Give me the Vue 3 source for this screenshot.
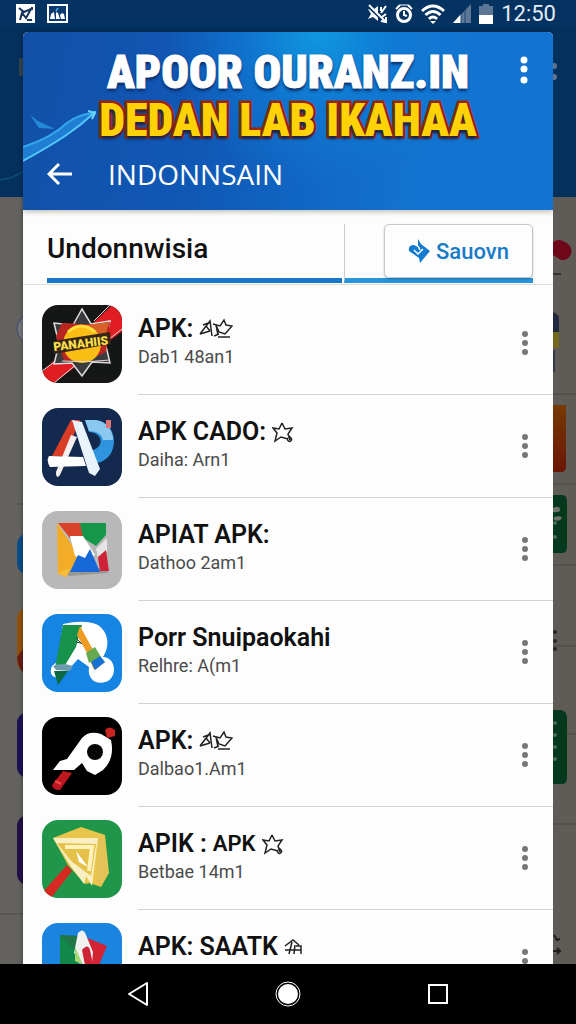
<template>
  <div class="screen">
    <header class="status">
      <div class="status-group">
        <svg width="19" height="19" viewBox="0 0 19 19">
          <path d="M0 0h19v19H0z" fill="#fff" />
          <path d="M3 4l5 4 7-3-5 9-4-5-2 7M11 16h5M16 3v3" fill="none" stroke="#16365f" stroke-width="2" />
        </svg>
        <svg width="21" height="19" viewBox="0 0 21 19">
          <rect x="1" y="1" width="19" height="17" fill="#0d3a6e" stroke="#fff" stroke-width="2" />
          <path d="M3 15l1-5 3-2 1 7zM9 15V8l2 1 2 6zM14 15l-1-4 2-2 2 1 1 5z" fill="#fff" />
          <path d="M9 7l2-3" stroke="#4aa9ee" stroke-width="1.5" />
        </svg>
      </div>
      <div class="status-group right">
        <svg width="20" height="20" viewBox="0 0 20 20" fill="none" stroke="#fff">
          <path d="M1 5l5 1 5-4v15l-5-4-5 2 3-5z" fill="#fff" stroke="none" />
          <path d="M1 2l17 16" stroke="#043261" stroke-width="3" />
          <path d="M2 1l16 16" stroke-width="2" />
          <path d="M14 9l5-7M15 13l4-3M14 3v4M19 13v5l-5-1" stroke-width="2" />
        </svg>
        <svg width="18" height="20" viewBox="0 0 18 20" fill="none" stroke="#fff">
          <circle cx="9" cy="11" r="6.5" stroke-width="3" />
          <path d="M9 7v4l3 1M1 5l4-4M17 5l-4-4" stroke-width="2" />
          <path d="M5 1h8" stroke-width="1" />
        </svg>
        <svg width="24" height="20" viewBox="0 0 24 20" fill="none" stroke="#fff" stroke-width="3">
          <path d="M1 7q11-10 22 0M4.5 11q7.5-7 15 0M8 15q4-4 8 0" />
          <path d="M9 17h6l-3 3z" fill="#fff" stroke="none" />
        </svg>
        <svg width="18" height="20" viewBox="0 0 18 20">
          <path d="M0 19L18 0v19z" fill="#5b7795" />
          <path d="M0 19l8-9v9z" fill="#fff" />
          <path d="M8 10v9M12 6v13" stroke="#1f4a77" />
        </svg>
        <svg width="14" height="20" viewBox="0 0 14 20">
          <path d="M4 0h6v2h4v18H0V2h4z" fill="#5b7795" />
          <path d="M0 11h14v9H0z" fill="#fff" />
        </svg>
        <time class="clock">12:50</time>
      </div>
    </header>

    <div class="stage">
      <svg class="gutter" viewBox="0 27 23 937" preserveAspectRatio="xMaxYMin slice">
        <path d="M0 27h23v170H0z" fill="#04305e" />
        <path d="M0 180q12-1 23-8" stroke="#15607f" fill="none" />
        <path d="M19 58h4v18h-4z" fill="#33434c" />
        <path d="M0 197h23v767H0z" fill="#64625e" />
        <circle cx="32" cy="329" r="15" fill="#77777a" stroke="#39466e" />
        <path d="M17 504h6M0 914h23" stroke="#4b4a48" />
        <rect x="17" y="533" width="30" height="42" rx="12" fill="#0d4c87" />
        <rect x="17" y="608" width="30" height="64" rx="10" fill="#92510d" />
        <path d="M17 657l6-8v23q-5-4-6-15z" fill="#671d16" />
        <rect x="17" y="712" width="30" height="66" rx="11" fill="#1e1154" />
        <rect x="17" y="815" width="30" height="70" rx="11" fill="#241049" />
      </svg>

      <main class="card">
        <div class="hero">
          <svg class="swoosh" width="76" height="60" viewBox="0 0 76 60" fill="none">
            <path d="M0 39Q28 30 44 15 56 6 71 5 62 15 46 25 22 43 0 52z" fill="#2389dd" opacity=".8" />
            <path d="M0 39Q28 30 44 15 56 6 71 5" stroke="#35a9ed" stroke-width="2" />
            <path d="M71 5Q57 18 42 28T0 53" stroke="#55c8fb" stroke-width="2" />
            <path d="M7 7l9 13 16 1-17-8z" fill="#2589d9" />
            <path d="M65 3l7 2-3 6 3-8" stroke="#6cd4ff" stroke-width="2" />
          </svg>
          <h1 class="banner">
            <span class="white">APOOR OURANZ.IN</span>
            <span class="gold">DEDAN LAB IKAHAA</span>
          </h1>
          <div class="toolbar">
            <button class="icon-btn" type="button" aria-label="Back">
              <svg width="26" height="24" viewBox="0 0 26 24" fill="none" stroke="#fff" stroke-width="3">
                <path d="M25 12H2M12 2L2 12l10 10" />
              </svg>
            </button>
            <span class="country">INDONNSAIN</span>
          </div>
          <button class="icon-btn hero-menu" type="button" aria-label="Menu">
            <svg width="8" height="28" viewBox="0 0 8 28" fill="#fff">
              <circle v-for="y in [4, 13, 24]" :key="y" cx="4" :cy="y" r="3.5" />
            </svg>
          </button>
        </div>

        <nav class="tabs">
          <a class="tab" href="#">Undonnwisia</a>
          <div class="tab-side">
            <button class="save" type="button">
              <svg width="22" height="24" viewBox="0 0 22 24">
                <path d="M10 0l3 5 9 7-10 12-1-5-10-7q-1-6 5-6l4 2z" fill="#147bd0" />
                <path d="M6 11l4 4 5-5M10 7l2 4" fill="none" stroke="#fff" stroke-width="1.5" />
              </svg>
              Sauovn
            </button>
          </div>
        </nav>

        <ul class="list">
          <li v-for="(app, i) in apps" :key="i" class="row">
            <svg class="app-icon" viewBox="0 0 80 78" v-html="app.icon"></svg>
            <div class="info">
              <div>
                <h2 class="name">
                  {{ app.name }}
                  <small v-if="app.extra">{{ app.extra }}</small>
                  <svg v-if="app.mark" :width="marks[app.mark].width" height="22" v-html="marks[app.mark].shape"></svg>
                </h2>
                <p class="sub">{{ app.sub }}</p>
              </div>
              <button class="icon-btn" type="button" :aria-label="'Options for ' + app.name">
                <svg width="8" height="26" viewBox="0 0 8 26" fill="#777">
                  <circle v-for="y in [4, 13, 22]" :key="y" cx="4" :cy="y" r="3" />
                </svg>
              </button>
            </div>
          </li>
        </ul>
      </main>

      <svg class="gutter" viewBox="0 27 23 937" preserveAspectRatio="xMinYMin slice">
        <path d="M0 27h23v170H0z" fill="#04305e" />
        <circle cx="1" cy="66" r="3" fill="#60758b" />
        <circle cx="1" cy="77" r="3" fill="#60758b" />
        <path d="M0 197h23v767H0z" fill="#5f5c57" />
        <path d="M0 242q6-4 12 0 8 4 6 12-3 7-10 6l-8-5z" fill="#6e0717" />
        <path d="M0 274h8" stroke="#33312e" stroke-width="2" />
        <path d="M0 312q7 2 6 10v10H0z" fill="#20283d" />
        <path d="M0 332h6v16H0z" fill="#74681d" />
        <path d="M0 350h2v22H0z" fill="#34394a" />
        <path d="M0 394h23M0 484h23M0 565h23M0 646h23M0 734h23M0 824h23" stroke="#484642" />
        <path d="M0 405h13v62q0 5-5 5H0z" fill="url(#rust)" />
        <path d="M0 495h9q5 0 5 6v46q0 6-5 6H0z" fill="#04391d" />
        <path d="M0 660h8q6 1 6 8v48q0 6-5 6H0z" transform="translate(0 62)" fill="#04391d" />
        <path d="M0 710h8q6 1 6 8v48q0 6-5 6H0z" fill="#04391d" />
        <path d="M0 508q6-3 7 1t-7 3zM1 517q7-2 8 1-2 4-8 2z" fill="#6f746b" />
        <circle v-for="y in [523, 537, 723, 735, 747, 759]" :key="y" cx="2" :cy="y" r="2" fill="#4a6a53" />
        <circle v-for="y in [632, 641, 649]" :key="y" cx="2" :cy="y" r="2" fill="#292725" />
        <path d="M1 935l3 5 3-1M0 951h6M4 948l3 3-3 3" stroke="#201f1e" stroke-width="2" fill="none" />
        <defs>
          <linearGradient id="rust" x2="0" y2="1">
            <stop stop-color="#763904" />
            <stop offset="1" stop-color="#6b1606" />
          </linearGradient>
        </defs>
      </svg>
    </div>

    <footer class="navbar">
      <button class="icon-btn" type="button" aria-label="Back">
        <svg width="22" height="26" viewBox="0 0 22 26">
          <path d="M20 2v22L2 13z" fill="none" stroke="#fff" stroke-width="2" stroke-linejoin="round" />
        </svg>
      </button>
      <button class="icon-btn" type="button" aria-label="Home">
        <svg width="26" height="26" viewBox="0 0 26 26">
          <circle cx="13" cy="13" r="10" fill="#fff" />
          <circle cx="13" cy="13" r="12" fill="none" stroke="#fff" />
        </svg>
      </button>
      <button class="icon-btn" type="button" aria-label="Recent apps">
        <svg width="22" height="22" viewBox="0 0 22 22">
          <rect x="2" y="2" width="18" height="18" fill="none" stroke="#fff" stroke-width="2" />
        </svg>
      </button>
    </footer>
  </div>
</template>

<script setup>
import { ref } from "vue";

// small line drawings that follow some of the names
const marks = {
  star: {
    width: 22,
    shape: `<path d="M10 2l3 6 7-1-4 6 2 6M16 18l-7-2-6 4 2-8-4-5 6 1 3-6M16 17a2 2 0 1 0 3 0l-2-2" fill="none" stroke="#222" stroke-width="1.5"/>`,
  },
  double: {
    width: 34,
    shape: `<g fill="none" stroke="#222" stroke-width="1.5"><path d="M1 16L11 3l2 15M4 7l8-3M1 16l10-3M7 8l4 5"/><path d="M14 6l7 2 4-6 2 5 6 1-7 8-6-2-3-7 2 10M15 18l5-2M19 19h12"/></g>`,
  },
  house: {
    width: 20,
    shape: `<path d="M1 10l8-6 6 5M1 14h16M8 6L5 18M11 9l-1 9M12 10h5v8" fill="none" stroke="#222" stroke-width="1.5"/>`,
  },
};

const apps = ref([
  {
    name: "APK:",
    mark: "double",
    sub: "Dab1 48an1",
    icon: `<rect width="80" height="78" fill="#151616"/>
      <path d="M70 0h12v25L12 78H0V67z" fill="#df1d22"/>
      <path d="M68 0L52 16M80 24L62 38M0 66l22-16M12 78l24-20" stroke="#ddd"/>
      <path d="M40 4l9 15 19-3-5 21 5 21-18-1-10 14-10-13-18 1 5-20-5-21 19 2z" fill="#393b3f" stroke="#ddd" stroke-width="1.5"/>
      <path d="M20 18l40 2 8-3-4 30-17 8-25 1-8-25z" fill="#b92520"/>
      <path d="M44 20l23-3-5 20z" fill="#d86128"/>
      <circle cx="40" cy="39" r="19" fill="#f9bd13"/>
      <path d="M26 27q13-12 27 0" stroke="#ffe13d" stroke-width="3" fill="none"/>
      <path d="M11 36l57-9 1 12-57 10z" fill="#382716"/>
      <text x="12" y="46" transform="rotate(-7 12 46)" font-family="Roboto,sans-serif" font-weight="900" font-size="12" fill="#ffe14b">PANAHIIS</text>
      <path d="M20 56q25 2 48-1" stroke="#e9d5d0" fill="none"/>`,
  },
  {
    name: "APK CADO:",
    mark: "star",
    sub: "Daiha: Arn1",
    icon: `<rect width="80" height="78" fill="#13294d"/>
      <path d="M43 12h10c25 2 25 39 2 43l-7-12c15-3 14-18-1-19z" fill="#2e94df"/>
      <path d="M43 12h10c12 1 18 11 18 20H61c-1-6-7-9-14-9z" fill="#8bc8ef"/>
      <path d="M29 12h9L23 48H10z" fill="#d93d28"/>
      <path d="M29 27l6 2-17 38q-4 5-4-3z" fill="#f6edf0"/>
      <path d="M7 48l34 1 3 9-36 1q-4-6-1-11z" fill="#fff"/>
      <path d="M30 12l10 2 18 47-5 7-6-3z" fill="#e8f3fb"/>
      <rect x="64" y="12" width="5" height="8" fill="#e57476"/>`,
  },
  {
    name: "APIAT APK:",
    sub: "Dathoo 2am1",
    icon: `<rect width="80" height="78" fill="#b8b8b8"/>
      <path d="M19 58l8 7 39-3-1-5z" fill="#989898"/>
      <path d="M15 12l23 34-14 20-8-3z" fill="#f2ac28"/>
      <path d="M16 12h22l4 15H28z" fill="#d84228"/>
      <path d="M38 12h26v12l-10 11-13-8z" fill="#16964a"/>
      <path d="M28 25h13l12 19-8 5-12-4z" fill="#fff"/>
      <path d="M54 38l11-11v14l-9 6z" fill="#e5e5e5"/>
      <path d="M48 38l10 23H28l8-17 7 3z" fill="#1769d8"/>
      <path d="M56 46l8-7 3 21h-9z" fill="#ce2336"/>
      <path d="M15 62l13-5-4 9z" fill="#f5bd39"/>`,
  },
  {
    name: "Porr Snuipaokahi",
    sub: "Relhre: A(m1",
    icon: `<rect width="80" height="78" fill="#1584e2"/>
      <path d="M21 10q22-5 35 1c11 8 12 21 5 32 12 0 15 18 5 24-11 5-21-1-19-14l-11-8-17 19q-14 0-9-12l6-5z" fill="#fff"/>
      <path d="M21 11h19l-6 22-12 20-9 1z" fill="#16924b"/>
      <path d="M38 12l12 22 13 14-11 8-7-17-10-18z" fill="#ee9c24"/>
      <path d="M44 39l9-6 6 10-12 6z" fill="#66a84d"/>
      <path d="M49 48l9-6 5 6-10 8z" fill="#1572d1"/>
      <path d="M11 52q8-4 20 0l-3 5-14-1z" fill="#6a9cad"/>
      <path d="M12 57h14L16 71z" fill="#0b6a42"/>
      <path d="M34 24l6 6M34 28l5 1" stroke="#174a2d"/>`,
  },
  {
    name: "APK:",
    mark: "double",
    sub: "Dalbao1.Am1",
    icon: `<rect width="80" height="78" fill="#000"/>
      <path d="M11 53l7-9 7-2 15-21q7-8 19-4l10 6q4 19-8 30l-8 5-8-4-5-8-8 7z" fill="#fff"/>
      <circle cx="53" cy="35" r="8" fill="#070707"/>
      <path d="M63 13q4-5 10 0v6l-8 2z" fill="#c72422"/>
      <path d="M21 54l9 2-12 17q-8 0-8-5z" fill="#bd1720"/>
      <path d="M13 64l6 3" stroke="#ef4a4c" stroke-width="2"/>`,
  },
  {
    name: "APIK :",
    extra: "APK",
    mark: "star",
    sub: "Betbae 14m1",
    icon: `<rect width="80" height="78" fill="#20964a"/>
      <path d="M25 45l5 6L9 78H0v-5z" fill="#d62922"/>
      <path d="M11 18L39 7l24 8 4 38-8 14-11-4-5 1L26 45z" fill="#e9c54b"/>
      <path d="M11 18h45l-6 48-6-10-2 8L28 45z" fill="#f8efc2"/>
      <path d="M15 23l39 1-5 32-20-15z" fill="#e6c149"/>
      <path d="M23 27h27l-3 24" fill="none" stroke="#fff2ba" stroke-width="4"/>
      <path d="M34 31l12 16-9-5z" fill="#fff"/>
      <path d="M56 19l6-1 4 36-8 12-3-4z" fill="#e3c357"/>`,
  },
  {
    name: "APK: SAATK",
    mark: "house",
    sub: "Dalbao 11am1",
    icon: `<rect width="80" height="78" fill="#1a84df"/>
      <path d="M18 12l19 2-1 38H18z" fill="#118847"/>
      <path d="M18 12l16 16 5-15z" fill="#217447"/>
      <path d="M43 14l22 9-13 31-12-15z" fill="#d42434"/>
      <path d="M36 10q5-6 8 2l7 17-2 22-17-21z" fill="#f1f1ef"/>
      <path d="M33 24l8 18-8-4z" fill="#a3d875"/>
      <path d="M40 27q6-7 8 0l5 25-10-10z" fill="#ce2337"/>`,
  },
]);
</script>

<style>
body {
  background: #000;
}
</style>

<style scoped>
* {
  box-sizing: border-box;
  margin: 0;
  padding: 0;
}
.screen {
  height: 100vh;
  display: flex;
  flex-direction: column;
  overflow: hidden;
  background: #04305e;
  font-family: Roboto, sans-serif;
}
.status {
  flex: none;
  display: flex;
  justify-content: space-between;
  align-items: center;
  height: 27px;
  padding: 0 20px 0 16px;
  background: #043261;
}
.status-group {
  display: flex;
  align-items: center;
  gap: 12px;
}
.right {
  gap: 8px;
}
.clock {
  color: #e4edf7;
  font-size: 22px;
  line-height: 26px;
}
.stage {
  flex: 1;
  min-height: 0;
  display: grid;
  grid-template-columns: 23px 1fr 23px;
  grid-template-rows: 100%;
}
.gutter {
  display: block;
  width: 100%;
  height: 100%;
}
.card {
  margin-top: 5px;
  overflow: hidden;
  border-radius: 5px 5px 0 0;
  background: #fdfdfd;
  box-shadow: 0 0 4px rgba(0, 0, 0, 0.4);
}
.icon-btn {
  display: flex;
  border: 0;
  background: none;
}
.hero {
  position: relative;
  height: 178px;
  padding-top: 16px;
  background: radial-gradient(circle at 56% 0, #0f98e0 0, rgba(15, 130, 218, 0.6) 22%, transparent 44%),
    linear-gradient(100deg, #1250a8 0%, #1058b6 35%, #1274d0 75%);
  box-shadow: 0 2px 5px rgba(0, 0, 0, 0.25);
}
.swoosh {
  position: absolute;
  left: 0;
  top: 76px;
}
.banner {
  position: relative;
  text-align: center;
  font-family: "Liberation Sans Narrow", "Roboto Condensed", Roboto, sans-serif;
  font-size: 46px;
  font-weight: 900;
  line-height: 48px;
  white-space: nowrap;
}
.banner span {
  display: block;
}
.white {
  color: #fff;
  -webkit-text-stroke: 1px #fff;
  text-shadow: 0 3px 3px #0b2f69, 0 0 2px #123d7a;
}
.gold {
  color: #ffd205;
  -webkit-text-stroke: 5px #9a2507;
  paint-order: stroke fill;
  text-shadow: 0 3px 3px #14264f;
}
.toolbar {
  position: relative;
  display: flex;
  align-items: center;
  gap: 35px;
  height: 60px;
  padding-left: 24px;
}
.country {
  color: #fff;
  font-family: "Open Sans", sans-serif;
  font-size: 28px;
  line-height: 36px;
}
.hero-menu {
  position: absolute;
  top: 24px;
  right: 25px;
}
.tabs {
  display: grid;
  grid-template-columns: 295fr 189fr;
  gap: 2px;
  height: 74px;
  padding: 14px 20px 0 24px;
}
.tab {
  height: 59px;
  padding-top: 6px;
  border-bottom: 5px solid #1878c8;
  color: #111;
  font-size: 28px;
  font-weight: 500;
  line-height: 38px;
  text-decoration: none;
}
.tab-side {
  display: flex;
  justify-content: flex-end;
  height: 59px;
  border-bottom: 5px solid #2794dc;
  border-left: 1px solid #ccc;
}
.save {
  display: flex;
  align-items: center;
  justify-content: center;
  gap: 6px;
  flex: none;
  width: 149px;
  height: 54px;
  border: 1px solid #c5c9ce;
  border-radius: 5px;
  background: #fdfdfd;
  box-shadow: 0 1px 2px rgba(0, 0, 0, 0.25);
  color: #187bc7;
  font-family: inherit;
  font-size: 22px;
  font-weight: 500;
}
.list {
  padding-top: 7px;
  border-top: 1px solid #ddd;
  list-style: none;
}
.row {
  display: flex;
  align-items: center;
  gap: 16px;
  height: 103px;
  padding-left: 19px;
}
.app-icon {
  flex: none;
  width: 80px;
  height: 78px;
  border-radius: 16px;
}
.info {
  flex: 1;
  display: flex;
  align-items: center;
  justify-content: space-between;
  height: 100%;
  padding-right: 24px;
  border-bottom: 1px solid #d3d3d3;
}
.name {
  display: flex;
  align-items: center;
  gap: 6px;
  color: #111;
  font-size: 25px;
  font-weight: 600;
  line-height: 32px;
  white-space: nowrap;
}
.name small {
  font-size: 22px;
}
.sub {
  padding-bottom: 4px;
  color: #4b4b4b;
  font-size: 18px;
  line-height: 24px;
}
.navbar {
  flex: none;
  display: flex;
  align-items: center;
  justify-content: center;
  gap: 126px;
  height: 60px;
  background: #000;
}
</style>
